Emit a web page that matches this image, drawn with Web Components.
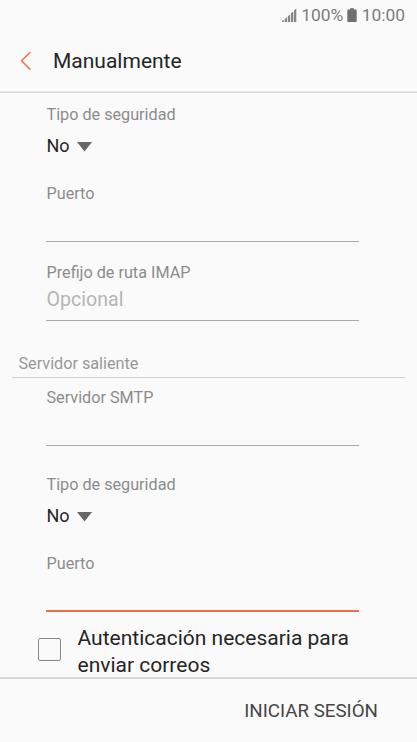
<!DOCTYPE html>
<html lang="es">
<head>
<meta charset="UTF-8">
<meta name="viewport" content="width=device-width, initial-scale=1">
<title>Manualmente</title>
<style>
    html, body { height: 100%; }
    body { margin: 0; background: #fafafa; color: #252525; font-family: Roboto, "Liberation Sans", sans-serif; overflow: hidden; }
</style>
</head>
<body>
<mail-setup>
    <status-bar slot="top" battery="100%" time="10:00"></status-bar>
    <page-header slot="top">Manualmente</page-header>
    <select-field label="Tipo de seguridad" value="No"></select-field>
    <text-field label="Puerto" style="margin-top:26px"></text-field>
    <text-field label="Prefijo de ruta IMAP" placeholder="Opcional" style="margin-top:21px"></text-field>
    <section-title>Servidor saliente</section-title>
    <text-field label="Servidor SMTP" style="margin-top:10px"></text-field>
    <select-field label="Tipo de seguridad" value="No" style="margin-top:29px"></select-field>
    <text-field label="Puerto" active style="margin-top:26px"></text-field>
    <check-row>Autenticación necesaria para enviar correos</check-row>
    <bottom-bar slot="bottom">INICIAR SESIÓN</bottom-bar>
</mail-setup>

<script>
class MailSetup extends HTMLElement {
    connectedCallback() {
        this.attachShadow({ mode: 'open' });
        this.shadowRoot.innerHTML = `
            <style>
                :host{display:flex;flex-direction:column;height:100vh;min-height:0}
                main{flex:1;min-height:0;overflow:hidden;padding-top:12px;box-sizing:border-box}
            </style>
            <slot name="top"></slot>
            <main><slot></slot></main>
            <slot name="bottom"></slot>
        `;
    }
}
customElements.define('mail-setup', MailSetup);

class StatusBar extends HTMLElement {
    connectedCallback() {
        const battery = this.getAttribute('battery') || '';
        const time = this.getAttribute('time') || '';

        this.attachShadow({ mode: 'open' });
        this.shadowRoot.innerHTML = `
            <style>
                :host{display:flex;flex:none;justify-content:flex-end;align-items:center;height:30px;padding-right:12px;box-sizing:border-box;font-size:17.4px;color:#7c7c7c}
                svg{display:block;fill:#707070}
                .signal{margin-right:4px}
                .battery{margin:0 5px 0 3.5px}
            </style>
            <svg class="signal" width="15" height="15" viewBox="0 0 15 15">
                <path d="M0 14V12.8L1.8 11.9V14ZM2.7 14V11L5 9.2V14ZM5.8 14V8.2L8.1 6.4V14ZM8.9 14V5.2L11.2 3.4V14ZM11.9 14V2.4L14.3 .6V14Z" fill="#868686"/>
            </svg>
            <span>${battery}</span>
            <svg class="battery" width="10" height="15" viewBox="0 0 10 15">
                <path d="M3 .3H7V1.5H8.8Q9.7 1.5 9.7 2.4V13Q9.7 13.9 8.8 13.9H1.2Q.3 13.9 .3 13V2.4Q.3 1.5 1.2 1.5H3Z"/>
            </svg>
            <span>${time}</span>
        `;
    }
}
customElements.define('status-bar', StatusBar);

class PageHeader extends HTMLElement {
    connectedCallback() {
        this.attachShadow({ mode: 'open' });
        this.shadowRoot.innerHTML = `
            <style>
                :host{display:block;flex:none;font-size:21px}
                header{display:flex;align-items:center;height:61px;padding-left:20px;border-bottom:1px solid #eaeaea}
                svg{display:block;margin-right:21px}
                .line{height:1px;background:#d6d6d6}
            </style>
            <header>
                <svg width="12" height="20" viewBox="0 0 12 20" fill="none" stroke="#f0794a" stroke-width="1.6">
                    <path d="M10.4 1L1.6 9.8L10.4 18.6"/>
                </svg>
                <slot></slot>
            </header>
            <div class="line"></div>
        `;
    }
}
customElements.define('page-header', PageHeader);

class SelectField extends HTMLElement {
    connectedCallback() {
        const label = this.getAttribute('label') || '';
        const value = this.getAttribute('value') || '';

        this.attachShadow({ mode: 'open' });
        this.shadowRoot.innerHTML = `
            <style>
                :host{display:block;margin-left:46px;padding-left:.5px}
                .label{font-size:16.2px;line-height:20px;color:#8c8c8c}
                .value{display:flex;align-items:center;gap:7.5px;margin-top:9px;font-size:18px;line-height:24px}
                svg{display:block;margin-top:2px;fill:#666}
            </style>
            <div class="label">${label}</div>
            <div class="value">
                <span>${value}</span>
                <svg width="15" height="10" viewBox="0 0 15 10"><path d="M0 0H15L7.5 9.5Z"/></svg>
            </div>
        `;
    }
}
customElements.define('select-field', SelectField);

class TextField extends HTMLElement {
    connectedCallback() {
        const label = this.getAttribute('label') || '';
        const placeholder = this.getAttribute('placeholder') || '';

        this.attachShadow({ mode: 'open' });
        this.shadowRoot.innerHTML = `
            <style>
                :host{display:block;margin:0 58px 0 46px}
                .label{padding-left:.5px;font-size:16.2px;line-height:20px;color:#8c8c8c}
                .input{height:38px;padding:5px 0 0 .5px;box-sizing:border-box;border-bottom:1px solid #acacac;font-size:19.6px;line-height:24px;color:#b5b5b5}
                :host([active]) .input{border-bottom:2px solid #ee7048}
            </style>
            <div class="label">${label}</div>
            <div class="input">${placeholder}</div>
        `;
    }
}
customElements.define('text-field', TextField);

class SectionTitle extends HTMLElement {
    connectedCallback() {
        this.attachShadow({ mode: 'open' });
        this.shadowRoot.innerHTML = `
            <style>
                :host{display:block;margin:33px 12px 0;padding:0 6.5px 3px;border-bottom:1px solid #d0d0d0;font-size:16.2px;line-height:20px;color:#989898}
            </style>
            <slot></slot>
        `;
    }
}
customElements.define('section-title', SectionTitle);

class CheckRow extends HTMLElement {
    connectedCallback() {
        this.attachShadow({ mode: 'open' });
        this.shadowRoot.innerHTML = `
            <style>
                :host{display:flex;align-items:flex-start;gap:16.5px;margin:13px 50px 0 38px;font-size:21px;line-height:26.5px}
                .box{flex:none;width:23px;height:23px;margin-top:13px;box-sizing:border-box;border:1.5px solid #868686;border-radius:2px}
            </style>
            <div class="box"></div>
            <div><slot></slot></div>
        `;
    }
}
customElements.define('check-row', CheckRow);

class BottomBar extends HTMLElement {
    connectedCallback() {
        this.attachShadow({ mode: 'open' });
        this.shadowRoot.innerHTML = `
            <style>
                :host{display:flex;flex:none;justify-content:flex-end;align-items:center;height:65px;padding:1px 39px 0 0;box-sizing:border-box;border-top:2px solid #d8d8d8;font-size:18.75px;color:#454545}
            </style>
            <slot></slot>
        `;
    }
}
customElements.define('bottom-bar', BottomBar);
</script>
</body>
</html>
